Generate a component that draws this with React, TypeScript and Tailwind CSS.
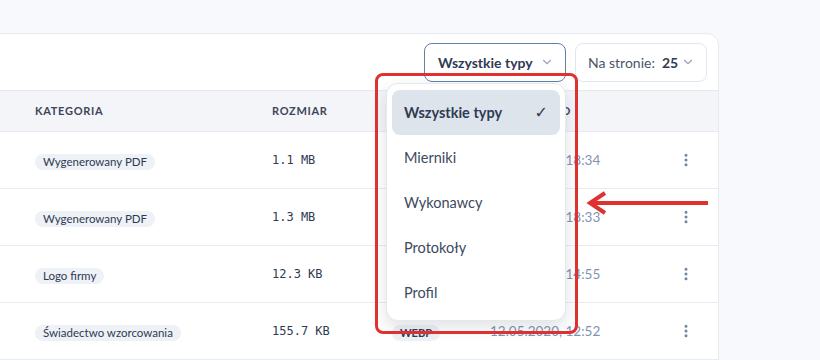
import React from 'react';
import { ChevronDown, EllipsisVertical } from 'lucide-react';

interface FileRow {
    id: number;
    category: string;
    size: string;
    type: string;
    date: string;
}

const rows: FileRow[] = [
    { id: 1, category: 'Wygenerowany PDF', size: '1.1 MB', type: 'PDF', date: '12.05.2020, 18:34' },
    { id: 2, category: 'Wygenerowany PDF', size: '1.3 MB', type: 'PDF', date: '12.05.2020, 18:33' },
    { id: 3, category: 'Logo firmy', size: '12.3 KB', type: 'PNG', date: '12.05.2020, 14:55' },
    { id: 4, category: 'Świadectwo wzorcowania', size: '155.7 KB', type: 'WEBP', date: '12.05.2020, 12:52' },
];

const options = ['Wszystkie typy', 'Mierniki', 'Wykonawcy', 'Protokoły', 'Profil'];

const grid = 'grid grid-cols-[54px_237px_120px_98px_1fr_52px] items-center';

export default function App() {
    return (
        <div
            className="relative w-[820px] h-[360px] overflow-hidden bg-[#f8f9fc] pt-[33px]"
            style={{ fontFamily: 'Lato, Inter, "Noto Sans", sans-serif' }}
        >
            {/* Card */}
            <div className="-ml-5 w-[739px] h-[400px] bg-white border border-[#e6e9f0] rounded-tr-xl">
                {/* Toolbar */}
                <div className="h-[56px] flex items-center justify-end gap-[9px] pr-[11px]">
                    <button className="h-[39px] w-[142px] flex items-center justify-between pl-[13px] pr-[11px] rounded-lg border border-[#5f82a6] bg-white whitespace-nowrap">
                        <span className="text-[14px] font-bold text-[#2f3b52]">Wszystkie typy</span>
                        <ChevronDown className="w-[14px] h-[14px] text-[#9aa7b8]" />
                    </button>
                    <button className="h-[39px] w-[132px] flex items-center justify-between pl-[12px] pr-[11px] rounded-lg border border-[#e2e6ee] bg-white whitespace-nowrap">
                        <span className="text-[14px] text-[#4b5668]">
                            Na stronie:<span className="font-bold text-[#2f3b52] ml-[7px]">25</span>
                        </span>
                        <ChevronDown className="w-[14px] h-[14px] text-[#9aa7b8]" />
                    </button>
                </div>

                {/* Header */}
                <div className={`${grid} h-[42px] bg-[#f3f5f9] border-y border-[#e6e9f0] text-[11px] font-bold uppercase tracking-[0.7px] text-[#3c4658]`}>
                    <div />
                    <div>Kategoria</div>
                    <div>Rozmiar</div>
                    <div>Typ</div>
                    <div>Utworzono</div>
                    <div />
                </div>

                {/* Rows */}
                {rows.map((row) => (
                    <div key={row.id} className={`${grid} h-[57px] border-b border-[#e8ebf2]`}>
                        <div />
                        <div>
                            <span className="inline-block px-[8px] rounded-full bg-[#eef1f6] text-[11.5px] leading-[16px] text-[#2f3b52]">
                                {row.category}
                            </span>
                        </div>
                        <div className="text-[12px] text-[#2f3b52]" style={{ fontFamily: '"DejaVu Sans Mono", "Liberation Mono", monospace' }}>
                            {row.size}
                        </div>
                        <div>
                            <span className="inline-block px-[8px] rounded-full bg-[#eef1f6] text-[11px] leading-[16px] font-bold text-[#2f3b52]">
                                {row.type}
                            </span>
                        </div>
                        <div className="text-[13.5px] text-[#7f94b2] whitespace-nowrap">{row.date}</div>
                        <div className="flex pl-[12px]">
                            <EllipsisVertical className="w-4 h-4 text-[#6f84a0]" strokeWidth={2.5} />
                        </div>
                    </div>
                ))}
            </div>

            {/* Dropdown menu */}
            <div className="absolute left-[386px] top-[83px] w-[180px] p-[5px] pt-[6px] bg-white border border-[#e4e8ef] rounded-xl shadow-[0_6px_16px_rgba(30,41,59,0.14)] flex flex-col">
                {options.map((opt, i) => (
                    <div
                        key={opt}
                        className={`h-[45px] flex items-center justify-between pl-[12px] pr-[12px] rounded-lg text-[14.5px] ${
                            i === 0 ? 'bg-[#dde4ec] font-bold text-[#2f3b52]' : 'text-[#3d4a60]'
                        }`}
                    >
                        <span>{opt}</span>
                        {i === 0 && (
                            <span className="text-[16px] text-[#2f3b52]" style={{ fontFamily: '"DejaVu Sans", sans-serif' }}>✓</span>
                        )}
                    </div>
                ))}
            </div>

            {/* Annotation */}
            <div className="absolute left-[375px] top-[73px] w-[203px] h-[261px] border-[3px] border-[#e03131] rounded-lg pointer-events-none" />
            <svg className="absolute left-[585px] top-[190px]" width="126" height="28" viewBox="0 0 126 28">
                <line x1="8" y1="13" x2="123" y2="13" stroke="#e03131" strokeWidth="4" />
                <polyline points="20,3 5,13 20,23" fill="none" stroke="#e03131" strokeWidth="4" />
            </svg>
        </div>
    );
}
